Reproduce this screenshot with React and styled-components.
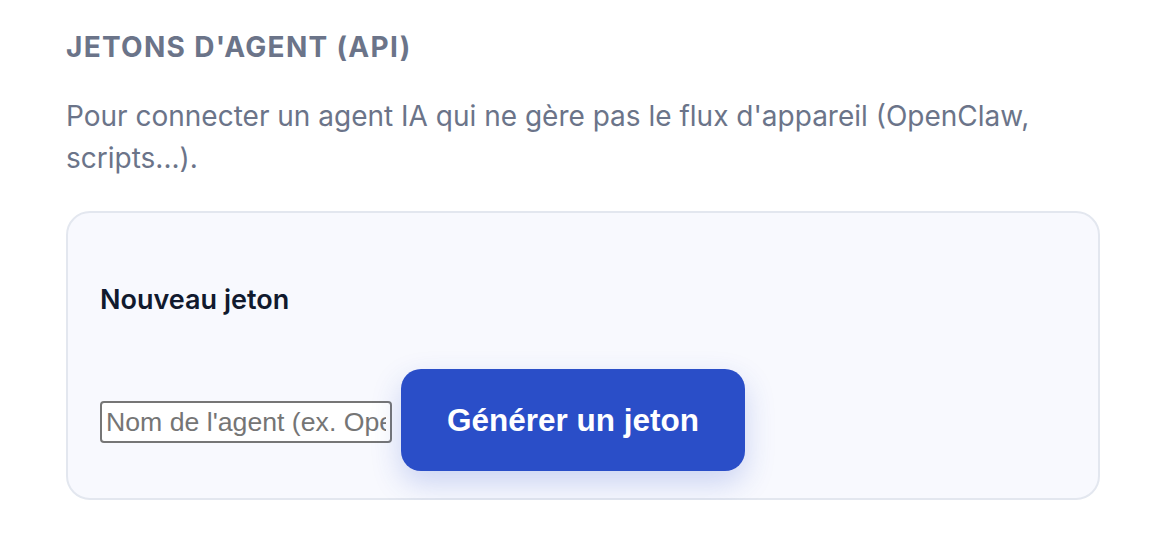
import React, { useState } from 'react'
import styled, { createGlobalStyle } from 'styled-components'

const GlobalStyle = createGlobalStyle`
  body {
    margin: 0;
    background: #ffffff;
    font-family: Inter, "Noto Sans", sans-serif;
  }
`

const Section = styled.section`
  width: 1034px;
  padding: 29px 0 0 66px;
`

const Title = styled.h2`
  margin: 0;
  font-size: 28px;
  line-height: 36px;
  font-weight: 700;
  letter-spacing: 1.3px;
  text-transform: uppercase;
  color: #6b7489;
`

const Intro = styled.p`
  margin: 30px 0 32px;
  font-size: 28px;
  line-height: 42px;
  color: #6b7489;
`

const Card = styled.div`
  background: #f8f9fe;
  border: 2px solid #e3e7ef;
  border-radius: 24px;
  padding: 70px 32px 27px;
`

const CardTitle = styled.h3`
  margin: 0 0 52px;
  font-size: 27px;
  line-height: 34px;
  font-weight: 600;
  color: #111a2e;
`

const Row = styled.div`
  display: flex;
  align-items: baseline;
  gap: 9px;
`

const NameInput = styled.input`
  width: 292px;
  height: 42px;
  box-sizing: border-box;
  padding: 2px 4px;
  border: 2px solid #767676;
  border-radius: 4px;
  background: #ffffff;
  font-family: "Liberation Sans", Arial, sans-serif;
  font-size: 26.67px;
  color: #111;

  &::placeholder {
    color: #757575;
  }
`

const GenerateButton = styled.button`
  height: 102px;
  padding: 0 46px;
  border: none;
  border-radius: 20px;
  background: #2a4ec8;
  color: #ffffff;
  font-family: "Liberation Sans", Arial, sans-serif;
  font-size: 31.5px;
  font-weight: 700;
  cursor: pointer;
  box-shadow: 0 12px 30px rgba(42, 78, 200, 0.22);
`

export default function App() {
  const [name, setName] = useState('')

  return (
    <>
      <GlobalStyle />
      <Section>
        <Title>Jetons d'agent (API)</Title>
        <Intro>
          Pour connecter un agent IA qui ne gère pas le flux d'appareil (OpenClaw, scripts...).
        </Intro>
        <Card>
          <CardTitle>Nouveau jeton</CardTitle>
          <Row>
            <NameInput
              value={name}
              onChange={(e) => setName(e.target.value)}
              placeholder="Nom de l'agent (ex. OpenClaw)"
            />
            <GenerateButton>Générer un jeton</GenerateButton>
          </Row>
        </Card>
      </Section>
    </>
  )
}
